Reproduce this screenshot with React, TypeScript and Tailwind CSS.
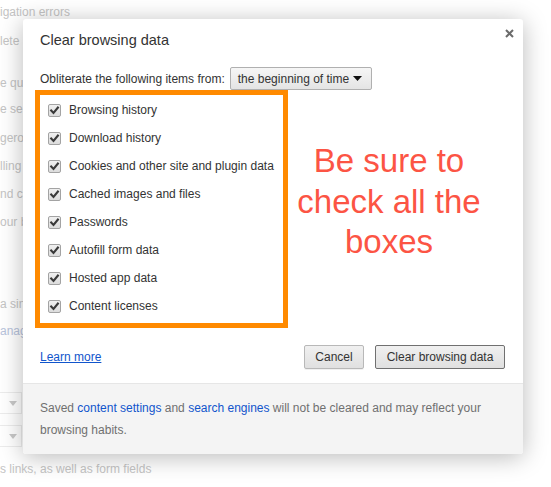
import React from "react";

const items = [
  "Browsing history",
  "Download history",
  "Cookies and other site and plugin data",
  "Cached images and files",
  "Passwords",
  "Autofill form data",
  "Hosted app data",
  "Content licenses",
];

function Check() {
  return (
    <span className="flex h-[13px] w-[13px] shrink-0 items-center justify-center rounded-[2px] border border-[#a3a3a3] bg-gradient-to-b from-[#f0f0f0] to-[#dcdcdc]">
      <svg width="11" height="11" viewBox="0 0 11 11">
        <path d="M2.2 5.6 L4.5 7.9 L8.9 2.6" fill="none" stroke="#3a3a3a" strokeWidth="2.1" strokeLinecap="square" />
      </svg>
    </span>
  );
}

function BgSelect() {
  return (
    <div className="flex h-[22px] w-[22px] items-center justify-end border-y border-r border-[#ececec] pr-[4px]">
      <svg width="8" height="5" viewBox="0 0 8 5">
        <path d="M0 0 H8 L4 5 Z" fill="#c8c8c8" />
      </svg>
    </div>
  );
}

export default function App() {
  return (
    <div className="relative h-[487px] w-[551px] overflow-hidden bg-white font-['Liberation_Sans',Arial,sans-serif] text-[12px] text-[#c4c4c4]">
      {/* background page */}
      <div className="flex flex-col">
        <div className="mt-[4px] h-[16px] leading-[16px]">igation errors</div>
        <div className="mt-[13px] h-[16px] leading-[16px]">lete</div>
        <div className="mt-[26px] h-[16px] leading-[16px]">e qu</div>
        <div className="mt-[10px] h-[16px] leading-[16px]">e se</div>
        <div className="mt-[13px] h-[16px] leading-[16px]">gero</div>
        <div className="mt-[12px] h-[16px] leading-[16px]">lling</div>
        <div className="mt-[12px] h-[16px] leading-[16px]">nd cr</div>
        <div className="mt-[12px] h-[16px] leading-[16px]">our b</div>
        <div className="mt-[66px] h-[16px] leading-[16px]">a sin</div>
        <div className="mt-[11px] h-[16px] leading-[16px] text-[#b7c3dc]">anag</div>
        <div className="mt-[53px]"><BgSelect /></div>
        <div className="mt-[11px]"><BgSelect /></div>
        <div className="mt-[14px] h-[16px] leading-[16px]">s links, as well as form fields</div>
      </div>

      {/* dialog */}
      <div className="absolute left-[23px] top-[19px] flex w-[500px] flex-col rounded-[3px] bg-white text-[#333] shadow-[0_3px_24px_rgba(0,0,0,0.28)]">
        <button className="absolute right-[9px] top-[9px] flex h-[10px] w-[10px] items-center justify-center">
          <svg width="9" height="9" viewBox="0 0 9 9">
            <path d="M1 1 L8 8 M8 1 L1 8" stroke="#6b6b6b" strokeWidth="2" />
          </svg>
        </button>
        <div className="px-[17px] pt-[11px]">
          <div className="h-[20px] text-[14.5px] leading-[20px] text-[#333]">Clear browsing data</div>
          <div className="mt-[17px] flex h-[23px] items-center gap-[5px]">
            <span>Obliterate the following items from:</span>
            <div className="flex h-[23px] w-[142px] items-center justify-between rounded-[2px] border border-[#b0b0b0] bg-gradient-to-b from-[#f6f6f6] to-[#e4e4e4] pl-[7px] pr-[9px]">
              <span>the beginning of time</span>
              <svg width="9" height="5" viewBox="0 0 9 5">
                <path d="M0 0 H9 L4.5 5 Z" fill="#111" />
              </svg>
            </div>
          </div>
          <div className="mt-[6px] flex flex-col pl-[8px]">
            {items.map((t) => (
              <div key={t} className="flex h-[28px] items-center gap-[8px]">
                <Check />
                <span>{t}</span>
              </div>
            ))}
          </div>
          <div className="mt-[25px] flex h-[24px] items-center justify-between pr-[1px]">
            <a className="text-[#1155cc] underline">Learn more</a>
            <div className="flex gap-[11px]">
              <button className="h-[24px] w-[60px] rounded-[2px] border border-[#b8b8b8] bg-gradient-to-b from-[#f0f0f0] to-[#e0e0e0] text-[12px] text-[#333] shadow-[0_1px_0_rgba(0,0,0,0.06)]">
                Cancel
              </button>
              <button className="h-[24px] w-[130px] rounded-[2px] border border-[#707070] bg-gradient-to-b from-[#f0f0f0] to-[#e0e0e0] text-[12px] text-[#333]">
                Clear browsing data
              </button>
            </div>
          </div>
        </div>
        <div className="mt-[14px] rounded-b-[3px] border-t border-[#e6e6e6] bg-[#f4f4f4] px-[17px] pb-[13px] pt-[13px] leading-[22px] text-[#707070]">
          Saved <span className="text-[#1155cc]">content settings</span> and{" "}
          <span className="text-[#1155cc]">search engines</span> will not be cleared and may reflect your browsing habits.
        </div>
      </div>

      {/* annotations */}
      <div className="absolute left-[35px] top-[90px] h-[238px] w-[253px] border-[5px] border-[#ff8a00]" />
      <div className="absolute left-[289px] top-[141px] w-[200px] text-center text-[33px] leading-[40.5px] text-[#fc5444]">
        Be sure to
        <br />
        check all the
        <br />
        boxes
      </div>
    </div>
  );
}
